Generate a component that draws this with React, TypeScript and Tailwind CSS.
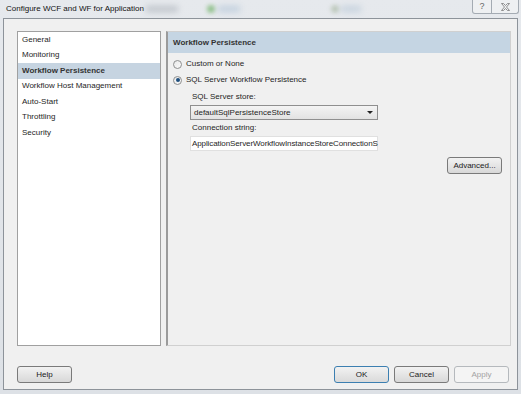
import React from 'react';

const NAV = [
  'General',
  'Monitoring',
  'Workflow Persistence',
  'Workflow Host Management',
  'Auto-Start',
  'Throttling',
  'Security',
];

const font = { fontFamily: '"Liberation Sans", Arial, sans-serif' };

const Btn: React.FC<{ label: string; primary?: boolean; disabled?: boolean }> = ({ label, primary, disabled }) => (
  <div
    className={`w-[55px] h-[17px] flex items-center justify-center rounded-[3px] border text-[8px] ${
      disabled
        ? 'border-[#b5b9bd] bg-[#f4f4f4] text-[#a3a3a3]'
        : primary
        ? 'border-[#3c7fb1] bg-gradient-to-b from-[#f2f2f2] to-[#dadada] text-[#1a1a1a]'
        : 'border-[#7a7a7a] bg-gradient-to-b from-[#f2f2f2] to-[#d8d8d8] text-[#1a1a1a]'
    }`}
  >
    {label}
  </div>
);

const Radio: React.FC<{ checked?: boolean; label: string }> = ({ checked, label }) => (
  <div className="h-[16px] flex items-center gap-[4px]">
    <span className="w-[9px] h-[9px] rounded-full border border-[#8e8f8f] bg-gradient-to-br from-[#e8e8e8] to-[#fafafa] flex items-center justify-center">
      {checked && <span className="w-[4px] h-[4px] rounded-full bg-[#1f4f7e]" />}
    </span>
    <span>{label}</span>
  </div>
);

export default function App() {
  return (
    <div className="w-[521px] h-[394px] bg-gradient-to-b from-[#e6e9ed] to-[#dde1e6] overflow-hidden relative text-[#1e1e1e]" style={font}>
      {/* title bar */}
      <div className="h-[18px] flex items-center pl-[6px] relative">
        <span className="text-[8px] text-[#111]">Configure WCF and WF for Application</span>
        <span className="absolute left-[146px] top-[6px] w-[32px] h-[6px] bg-[#a4abb3] blur-[3px] opacity-60" />
        <span className="absolute left-[207px] top-[5px] w-[8px] h-[8px] rounded-full bg-[#5aa84f] blur-[2px] opacity-60" />
        <span className="absolute left-[218px] top-[6px] w-[22px] h-[6px] bg-[#9cb6cf] blur-[3px] opacity-50" />
        <span className="absolute left-[331px] top-[5px] w-[8px] h-[8px] rounded-full bg-[#94a88a] blur-[2px] opacity-50" />
        <span className="absolute left-[341px] top-[6px] w-[20px] h-[6px] bg-[#a6bbcf] blur-[3px] opacity-50" />
        <div className="absolute right-[2px] top-0 flex">
          <div className="w-[20px] h-[14px] border border-t-0 border-[#a4abb3] rounded-bl-[3px] bg-[#eef0f2] flex items-center justify-center text-[9px] text-[#666]">
            ?
          </div>
          <div className="w-[27px] h-[14px] border border-t-0 border-l-0 border-[#a4abb3] rounded-br-[3px] bg-[#eef0f2] flex items-center justify-center">
            <svg width="9" height="8" viewBox="0 0 9 8">
              <path
                d="M0.5 0.5 H2.5 L4.5 2.5 L6.5 0.5 H8.5 L5.5 4 L8.5 7.5 H6.5 L4.5 5.5 L2.5 7.5 H0.5 L3.5 4 Z"
                fill="none"
                stroke="#777"
                strokeWidth="0.8"
              />
            </svg>
          </div>
        </div>
      </div>

      {/* client area */}
      <div className="mx-[3px] h-[372px] border border-[#8d939a] bg-[#f0f0f0] pl-[13px] pt-[12px] flex flex-col">
        <div className="flex gap-[5px] h-[315px]">
          <div className="w-[144px] h-full border border-[#a0a0a0] bg-white text-[8px]">
            {NAV.map((n, i) => (
              <div
                key={n}
                className={`h-[15.5px] flex items-center pl-[4px] ${i === 2 ? 'bg-[#c6d4e1] font-bold text-[#333]' : ''}`}
              >
                {n}
              </div>
            ))}
          </div>
          <div className="w-[345px] h-full border border-[#d0d0d0] border-l-2 border-l-[#9b9b9b] bg-[#f0f0f0] text-[8px] flex flex-col">
            <div className="h-[21px] bg-[#c5d5e3] flex items-center pl-[5px] font-bold text-[#333]">Workflow Persistence</div>
            <div className="pl-[5px] pt-[3px]">
              <Radio label="Custom or None" />
              <Radio checked label="SQL Server Workflow Persistence" />
              <div className="pl-[17px] w-[205px]">
                <div className="h-[17px] flex items-center pl-[2px]">SQL Server store:</div>
                <div className="h-[15px] border border-[#8f8f8f] bg-gradient-to-b from-[#f4f4f4] to-[#e2e2e2] flex items-center justify-between pl-[3px] pr-[4px]">
                  <span>defaultSqlPersistenceStore</span>
                  <span className="w-0 h-0 border-l-[3px] border-r-[3px] border-t-[3px] border-l-transparent border-r-transparent border-t-[#222]" />
                </div>
                <div className="h-[16px] flex items-center pl-[2px]">Connection string:</div>
                <div className="h-[15px] border border-[#e0e0e0] bg-white flex items-center pl-[1px] whitespace-nowrap tracking-[-0.1px]">
                  ApplicationServerWorkflowInstanceStoreConnectionS
                </div>
              </div>
            </div>
            <div className="flex justify-end pr-[8px] mt-[6px]">
              <Btn label="Advanced..." />
            </div>
          </div>
        </div>
        <div className="flex items-center mt-[20px] pr-[8px]">
          <Btn label="Help" />
          <div className="ml-auto flex gap-[5px]">
            <Btn label="OK" primary />
            <Btn label="Cancel" />
            <Btn label="Apply" disabled />
          </div>
        </div>
      </div>
    </div>
  );
}
